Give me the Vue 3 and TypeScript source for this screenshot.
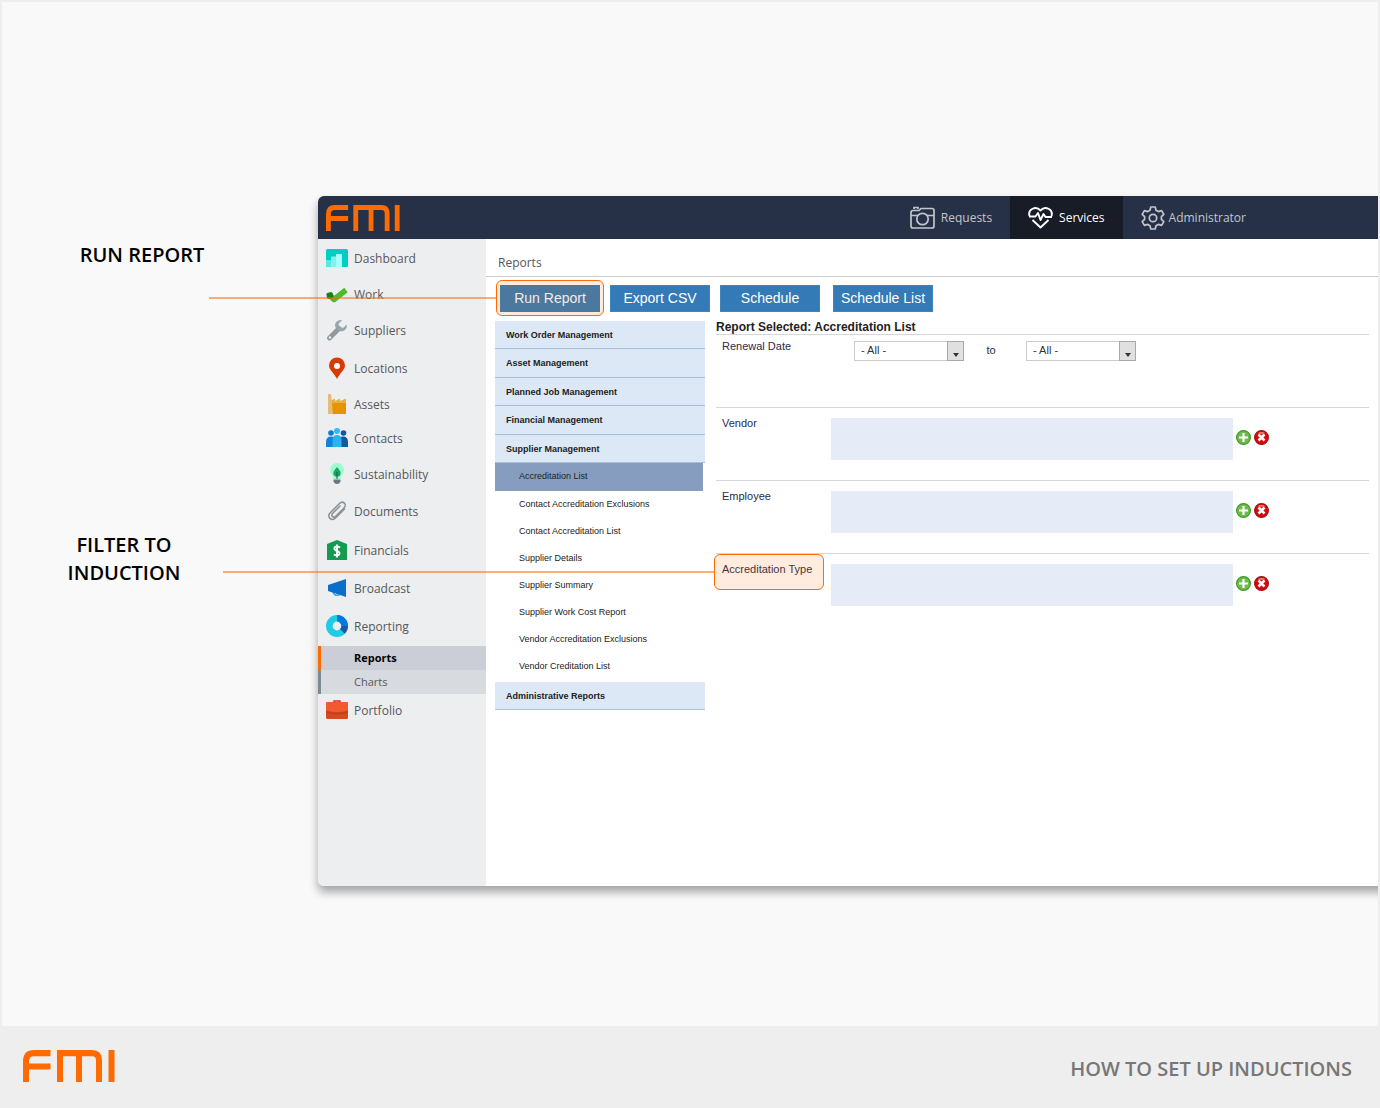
<script setup lang="ts">
import { ref } from 'vue'

interface NavItem {
  name: string
  size?: 'tall' | 'short' | 'mid'
}

const mainNav: NavItem[] = [
  { name: 'Dashboard' },
  { name: 'Work' },
  { name: 'Suppliers' },
  { name: 'Locations', size: 'tall' },
  { name: 'Assets', size: 'short' },
  { name: 'Contacts' },
  { name: 'Sustainability' },
  { name: 'Documents', size: 'mid' },
  { name: 'Financials', size: 'tall' },
  { name: 'Broadcast' },
  { name: 'Reporting', size: 'tall' },
  { name: 'Portfolio', size: 'short' },
]

const categories = [
  'Work Order Management',
  'Asset Management',
  'Planned Job Management',
  'Financial Management',
  'Supplier Management',
]

const supplierReports = [
  'Accreditation List',
  'Contact Accreditation Exclusions',
  'Contact Accreditation List',
  'Supplier Details',
  'Supplier Summary',
  'Supplier Work Cost Report',
  'Vendor Accreditation Exclusions',
  'Vendor Creditation List',
]

const selected = ref('Accreditation List')

const filters = [
  { id: 'vendor', label: 'Vendor', marked: false },
  { id: 'employee', label: 'Employee', marked: false },
  { id: 'type', label: 'Accreditation Type', marked: true },
]
</script>

<template>
  <div class="page">
    <div class="stage">
      <aside class="notes">
        <p class="note note-run">RUN REPORT</p>
        <p class="note note-filter">FILTER TO<br />INDUCTION</p>
      </aside>

      <div class="window">
        <header class="topbar">
          <svg class="logo" viewBox="0 0 92 31" preserveAspectRatio="none" role="img" aria-label="FMI" fill="none" stroke="#ff6b00" stroke-width="6">
            <path d="M3 31V11Q3 3 11 3H27.500M3 16H27.500M37 31V3H69Q76 3 76 10V31M56 3V31M88.500 0V31" />
          </svg>
          <nav class="tabs">
            <a href="#" class="tab">
              <svg width="25" height="24" viewBox="0 0 25 24" fill="none" stroke="currentColor" stroke-width="1.700">
                <path d="M3 4.500H9L11 2.500H22Q24 2.500 24 4.500V20Q24 22 22 22H3Q1 22 1 20V6.500Q1 4.500 3 4.500M1 9.500H8M17 9.500H24M4 3V1.500H8V3" />
                <circle cx="12.500" cy="13" r="5.700" />
              </svg>
              Requests
            </a>
            <a href="#" class="tab active">
              <svg width="25" height="24" viewBox="0 0 25 24" fill="none" stroke="currentColor" stroke-width="1.900" stroke-linejoin="round">
                <path d="M1.500 10C-.5 3 8 -.5 12.500 4.500C17 -.5 25.500 3 23.500 10M1 10.500H7.500L10 7L12.500 14L15.500 8L17.500 11H24M4.500 14L12.500 21.500L20.500 14" />
              </svg>
              Services
            </a>
            <a href="#" class="tab admin">
              <svg width="24" height="24" viewBox="0 0 24 24" fill="none" stroke="currentColor" stroke-width="1.700" stroke-linejoin="round">
                <path d="M9.800 1H14.200L15 4.300L17.300 5.600L20.600 4.600L22.800 8.400L20.400 10.700V13.300L22.800 15.600L20.600 19.400L17.300 18.400L15 19.700L14.200 23H9.800L9 19.700L6.700 18.400L3.400 19.400L1.200 15.600L3.600 13.300V10.700L1.200 8.400L3.400 4.600L6.700 5.600L9 4.300Z" />
                <circle cx="12" cy="12" r="3.700" />
              </svg>
              Administrator
            </a>
          </nav>
        </header>

        <div class="body">
          <nav class="sidebar">
            <template v-for="item in mainNav" :key="item.name">
              <a href="#" class="nav-item" :class="item.size">
                <svg class="nav-icon" width="22" height="22" viewBox="0 0 22 22">
                  <template v-if="item.name === 'Dashboard'">
                    <rect y="2" width="22" height="18" rx="1.500" fill="#00cdc3" />
                    <path d="M0 13H5V20H1.500Q0 20 0 18.500Z" fill="#5ae8e2" />
                    <path d="M5 9.500H10V20H5Z" fill="#7ff2ee" />
                    <path d="M10 7H16V20H10Z" fill="#a8fffb" />
                  </template>
                  <template v-else-if="item.name === 'Work'">
                    <path d="M3.500 12L8 16.500L20 7" fill="none" stroke="#4cbb2c" stroke-width="5.500" stroke-linejoin="round" />
                    <rect x="0.500" y="9.500" width="6.500" height="6.500" rx="2" transform="rotate(-12 3 12)" fill="#17810f" />
                  </template>
                  <template v-else-if="item.name === 'Suppliers'">
                    <path d="M3.500 19L13 9.500" stroke="#8f999f" stroke-width="4.800" stroke-linecap="round" />
                    <path d="M16 1.200C11 .4 8 4.500 9.500 8.500L13 12C17.500 13.500 22 10 20.500 5.500L17 9L13.500 8L12.500 4.700Z" fill="#9aa5ac" />
                    <circle cx="4" cy="18.500" r="1.200" fill="#edeff0" />
                  </template>
                  <template v-else-if="item.name === 'Locations'">
                    <path d="M11 22C9 17 3 13 3 8.500A8 8 0 0 1 19 8.500C19 13 13 17 11 22Z" fill="#d83b01" />
                    <circle cx="11" cy="9" r="3" fill="#fff" />
                  </template>
                  <template v-else-if="item.name === 'Assets'">
                    <path d="M4 11V8L9 5.500V8L14 5.500V8L20 5.500V12H4Z" fill="#e8b04a" />
                    <path d="M5 10H20V21H5Z" fill="#e59400" />
                    <path d="M2 1H5L7 21H2Z" fill="#e4bc78" />
                  </template>
                  <template v-else-if="item.name === 'Contacts'">
                    <circle cx="5" cy="6" r="2.800" fill="#1479d2" />
                    <circle cx="17.500" cy="6" r="2.800" fill="#105a9e" />
                    <path d="M0 20V15Q0 9.500 5 9.500Q9 9.500 9 14V20Z" fill="#1183dc" />
                    <path d="M13 20V14Q13 9.500 17 9.500Q22 9.500 22 15V20Z" fill="#10599f" />
                    <circle cx="11" cy="4" r="3" fill="#36b8f4" />
                    <path d="M6.500 20V13Q6.500 8 11 8Q15.500 8 15.500 13V20Z" fill="#29b3f0" />
                  </template>
                  <template v-else-if="item.name === 'Sustainability'">
                    <path d="M11 0A7 7 0 0 1 18 7C18 11 14.500 12 14.500 16H7.500C7.500 12 4 11 4 7A7 7 0 0 1 11 0Z" fill="#9dfccd" />
                    <path d="M11 4C14.500 8 15.500 10 14 12.500Q12.500 14 11 13.500Q9.500 14 8 12.500C6.500 10 7.500 8 11 4Z" fill="#21a366" />
                    <path d="M11 9V16" stroke="#185c37" />
                    <path d="M7.500 16.500H14.500V18.500Q13.500 21 11 21Q8.500 21 7.500 18.500Z" fill="#6c777d" />
                  </template>
                  <template v-else-if="item.name === 'Documents'">
                    <path d="M18.500 9L10 17.500C5.500 22 .5 17 4 13L13.500 3.500C17 0 21.500 4.500 18 8L9.500 16.500C7.500 18.500 4.500 15.500 6.500 13.500L14 6" fill="none" stroke="#8b9093" stroke-width="1.500" stroke-linecap="round" />
                  </template>
                  <template v-else-if="item.name === 'Financials'">
                    <path d="M11 1L21 5V21H1V5Z" fill="#159a52" />
                    <path d="M14 8.500Q11 6.800 9 8Q7.500 9.800 9.500 11.200L12.800 12.800Q14.500 14.500 12.500 16Q10.500 17 7.800 15.500M11 5.500V18.500" fill="none" stroke="#fff" stroke-width="1.900" />
                  </template>
                  <template v-else-if="item.name === 'Broadcast'">
                    <path d="M7 14Q7.500 19.500 13.500 18" fill="none" stroke="#35a7ea" stroke-width="1.500" />
                    <path d="M2 8L20 2V20L2 14Z" fill="#0a6fc9" />
                  </template>
                  <template v-else-if="item.name === 'Reporting'">
                    <circle cx="11" cy="11" r="7.700" fill="none" stroke="#1fcce5" stroke-width="6.600" />
                    <path d="M11 3.300A7.700 7.700 0 0 1 18.700 11" fill="none" stroke="#0078dc" stroke-width="6.600" />
                    <path d="M18.700 11A7.700 7.700 0 0 1 16.400 16.400" fill="none" stroke="#185aa8" stroke-width="6.600" />
                  </template>
                  <template v-else>
                    <path d="M8 3.500V2H14V3.500" fill="none" stroke="#bd3f1c" stroke-width="1.500" />
                    <rect y="3" width="22" height="17" rx="1.500" fill="#d9481f" />
                    <path d="M0 4.500Q0 3 1.500 3H20.500Q22 3 22 4.500V12Q11 15 0 12Z" fill="#f05a2e" />
                    <path d="M0 11.500Q11 15 22 11.500V14Q11 17 0 14Z" fill="#b83c18" opacity=".6" />
                  </template>
                </svg>
                {{ item.name }}
              </a>
              <div v-if="item.name === 'Reporting'" class="subnav">
                <a href="#" class="sub current">Reports</a>
                <a href="#" class="sub">Charts</a>
              </div>
            </template>
          </nav>

          <main class="content">
            <h1 class="title">Reports</h1>
            <div class="actions">
              <span class="marked-button callout"><button type="button">Run Report</button></span>
              <button type="button">Export CSV</button>
              <button type="button">Schedule</button>
              <button type="button" class="last">Schedule List</button>
            </div>

            <div class="columns">
              <div class="report-menu">
                <a v-for="c in categories" :key="c" href="#" class="category">{{ c }}</a>
                <div class="reports">
                  <a
                    v-for="r in supplierReports"
                    :key="r"
                    href="#"
                    class="report"
                    :class="{ chosen: r === selected }"
                    @click.prevent="selected = r"
                  >{{ r }}</a>
                </div>
                <a href="#" class="category">Administrative Reports</a>
              </div>

              <form class="filters" @submit.prevent>
                <h2>Report Selected: {{ selected }}</h2>
                <div class="row dates">
                  <label class="row-label" for="date-from">Renewal Date</label>
                  <span class="picker">
                    <select id="date-from"><option>- All -</option></select>
                    <span class="arrow"></span>
                  </span>
                  <label class="to" for="date-to">to</label>
                  <span class="picker">
                    <select id="date-to"><option>- All -</option></select>
                    <span class="arrow"></span>
                  </span>
                </div>
                <div v-for="f in filters" :key="f.id" class="row">
                  <label class="row-label" :for="f.id">
                    {{ f.label }}
                    <span v-if="f.marked" class="label-mark callout"></span>
                  </label>
                  <textarea :id="f.id" class="box" readonly></textarea>
                  <div class="tools">
                    <button type="button" :aria-label="'Add ' + f.label">
                      <svg width="15" height="15" viewBox="0 0 15 15">
                        <circle cx="7.500" cy="7.500" r="6.900" fill="#70b94a" stroke="#3d9a2b" stroke-width="1.200" />
                        <path d="M7.500 3V12M3 7.500H12" stroke="#fff" stroke-width="2.200" />
                      </svg>
                    </button>
                    <button type="button" :aria-label="'Clear ' + f.label">
                      <svg width="15" height="15" viewBox="0 0 15 15">
                        <circle cx="7.500" cy="7.500" r="6.900" fill="#dc0508" stroke="#a01818" stroke-width="1.200" />
                        <path d="M3.500 3.200Q7.500 .8 11.500 3.200Q7.500 4.500 3.500 3.200Z" fill="#e98080" />
                        <path d="M4.500 4.500L10.500 10.500M10.500 4.500L4.500 10.500" stroke="#fff" stroke-width="2.600" />
                      </svg>
                    </button>
                  </div>
                </div>
              </form>
            </div>
          </main>
        </div>
      </div>
    </div>

    <footer class="footer">
      <svg class="footer-logo" viewBox="0 0 92 31" preserveAspectRatio="none" role="img" aria-label="FMI" fill="none" stroke="#ff6b00" stroke-width="6">
        <path d="M3 31V11Q3 3 11 3H27.500M3 16H27.500M37 31V3H69Q76 3 76 10V31M56 3V31M88.500 0V31" />
      </svg>
      <span class="footer-title">HOW TO SET UP INDUCTIONS</span>
    </footer>
  </div>
</template>

<style>
body {
  background: #eeeeee;
}
</style>

<style scoped>
* {
  box-sizing: border-box;
}
a {
  color: inherit;
  text-decoration: none;
}
.page {
  min-height: 100vh;
  display: flex;
  flex-direction: column;
  font-family: "Open Sans", "Noto Sans", sans-serif;
}
.stage {
  flex: 1;
  display: flex;
  align-items: flex-start;
  padding: 194px 0 138px;
  border: 2px solid #eeeeee;
  border-bottom: 0;
  background: #f9f9f9;
  overflow: hidden;
}
.notes {
  flex: 0 0 316px;
  padding-top: 45px;
}
.note {
  margin: 0;
  color: #000;
  font-size: 20px;
  font-weight: 600;
  line-height: 28px;
  text-align: center;
}
.note-run {
  width: 280px;
}
.note-filter {
  width: 244px;
  margin-top: 262px;
}
/* The window runs past the right edge so that its shadow is cut off there. */
.window {
  flex: 1;
  min-width: 0;
  display: flex;
  flex-direction: column;
  min-height: 690px;
  margin-right: -12px;
  border-radius: 6px 0 0 6px;
  background: #fff;
  box-shadow: 0 6px 10px rgba(0, 0, 0, 0.35);
}
.topbar {
  display: flex;
  align-items: stretch;
  justify-content: space-between;
  height: 43px;
  padding-right: 126px;
  border-radius: 6px 0 0 0;
  background: #263148;
}
.logo {
  width: 74px;
  height: 26px;
  margin: 9px 8px;
}
.tabs {
  display: flex;
}
.tab {
  display: flex;
  align-items: center;
  gap: 6px;
  padding: 0 18px;
  color: #c2c5cb;
  font-size: 12px;
}
.tab.active {
  color: #fff;
  background: #171c27;
}
.tab.admin {
  gap: 4px;
}
.body {
  flex: 1;
  display: flex;
}
.sidebar {
  flex: 0 0 168px;
  padding-top: 1px;
  border-radius: 0 0 0 6px;
  background: #edeef0;
  color: #55585c;
  font-size: 12px;
}
.nav-item {
  display: flex;
  align-items: center;
  gap: 6px;
  height: 36px;
  padding-left: 8px;
}
.nav-item.tall {
  height: 40px;
}
.nav-item.mid {
  height: 38px;
}
.nav-item.short {
  height: 32px;
}
.sub {
  display: block;
  height: 24px;
  padding-left: 33px;
  border-left: 3px solid #7c8a94;
  background: #d7dadf;
  font-size: 11px;
  line-height: 24px;
}
.sub.current {
  border-color: #ff6b00;
  background: #cbced6;
  color: #000;
  font-weight: 700;
}
.content {
  flex: 1;
  min-width: 0;
}
.title {
  height: 38px;
  margin: 0;
  padding: 12px 12px 0;
  border-bottom: 1px solid #ccc;
  color: #55585c;
  font-size: 12px;
  font-weight: 400;
  line-height: 24px;
}
.actions {
  display: flex;
  align-items: center;
  gap: 10px;
  height: 44px;
  padding: 0 0 2px 10px;
  font-family: "Liberation Sans", Arial, sans-serif;
}
.actions button {
  width: 100px;
  height: 27px;
  padding: 0;
  border: 1px solid #3c86c0;
  background: #337ab7;
  color: #fff;
  font: inherit;
  font-size: 14px;
}
.actions .last {
  margin-left: 3px;
}
.callout {
  position: relative;
  border: 1px solid #ff6b00;
  border-radius: 6px;
}
.callout::before {
  content: "";
  position: absolute;
  right: 100%;
  top: 50%;
  height: 2px;
  margin-top: -1px;
  background: rgba(255, 107, 0, 0.55);
}
.marked-button {
  display: flex;
  align-items: center;
  justify-content: center;
  width: 108px;
  height: 36px;
  margin-right: -4px;
  background: #ffeadd;
}
.marked-button::before {
  width: 288px;
}
.actions .marked-button button {
  border-color: #4c78a0;
  background: #4b789f;
  color: #f5ebe6;
}
.columns {
  display: flex;
  gap: 11px;
  padding: 0 21px 24px 9px;
  font-family: "Liberation Sans", Arial, sans-serif;
}
.report-menu {
  flex: 0 0 210px;
  color: #222;
  font-size: 9px;
}
.category {
  display: flex;
  align-items: center;
  height: 28px;
  padding-left: 11px;
  border-bottom: 1px solid #a9bedc;
  background: #dce8f6;
  font-weight: 700;
}
.category:nth-child(even) {
  height: 29px;
}
.reports {
  padding-bottom: 2px;
}
.report {
  display: flex;
  align-items: center;
  height: 27px;
  padding: 0 0 2px 24px;
}
.report.chosen {
  height: 28px;
  margin-right: 2px;
  background: #869dbf;
}
.filters {
  flex: 1;
  min-width: 0;
  color: #2b2b4a;
  font-size: 11px;
}
h2 {
  height: 13px;
  margin: 0;
  color: #222;
  font-size: 12px;
  line-height: 12px;
}
.row {
  display: flex;
  align-items: flex-start;
  height: 73px;
  padding: 9px 100px 0 6px;
  border-top: 1px solid #d5d7de;
}
.row.dates {
  padding-top: 6px;
}
.row-label {
  position: relative;
  flex: 0 0 109px;
  line-height: 12px;
}
.dates .row-label {
  flex-basis: 132px;
  line-height: 10px;
}
.label-mark {
  position: absolute;
  left: -8px;
  top: -9px;
  width: 110px;
  height: 36px;
  background: rgba(255, 107, 0, 0.13);
}
.label-mark::before {
  width: 492px;
}
.picker {
  position: relative;
}
select {
  display: block;
  width: 110px;
  height: 20px;
  padding: 0 6px 2px;
  border: 1px solid #ccc;
  border-radius: 0;
  appearance: none;
  background: #fff;
  color: #333;
  font: inherit;
}
.arrow {
  position: absolute;
  right: 0;
  top: 0;
  width: 17px;
  height: 20px;
  border: 1px solid #aaa;
  background: #e0e0e0;
  pointer-events: none;
}
.arrow::after {
  content: "";
  position: absolute;
  left: 5px;
  top: 11px;
  border: 3px solid transparent;
  border-top: 4px solid #333;
  border-bottom: 0;
}
.to {
  width: 62px;
  padding-right: 8px;
  text-align: center;
  line-height: 18px;
}
.box {
  flex: 1;
  min-width: 0;
  height: 42px;
  margin-top: 1px;
  padding: 4px;
  border: 0;
  background: #e5ecf7;
  resize: none;
  font: inherit;
}
.tools {
  display: flex;
  gap: 3px;
  margin: 13px -100px 0 3px;
  padding-right: 100px;
}
.tools button {
  display: block;
  width: 15px;
  height: 15px;
  padding: 0;
  border: 0;
  background: none;
}
.tools svg {
  display: block;
}
.footer {
  display: flex;
  align-items: center;
  justify-content: space-between;
  height: 82px;
  padding: 0 28px 2px 23px;
  background: #eeeeee;
  color: #777;
  font-size: 20px;
  font-weight: 600;
}
.footer-title {
  padding-top: 4px;
}
.footer-logo {
  width: 92px;
  height: 32px;
}
</style>
